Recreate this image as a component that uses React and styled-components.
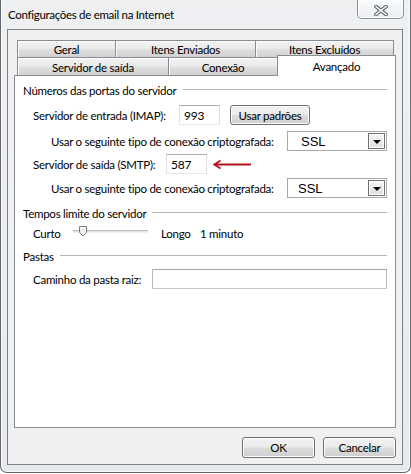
import React from 'react';
import styled, { createGlobalStyle } from 'styled-components';

const Global = createGlobalStyle`
  html, body { margin: 0; padding: 0; background: #ffffff; }
  body { font-family: Lato, "Noto Sans", sans-serif; font-size: 11.5px; letter-spacing: -0.25px; color: #000; }
  * { box-sizing: border-box; }
`;

const Window = styled.div`
  width: 411px;
  height: 473px;
  border: 1px solid #62666b;
  border-top: none;
  border-radius: 0 0 7px 7px;
  background: linear-gradient(#eef0f2, #e7eaed);
  box-shadow: inset 1px 0 0 #fbfcfd, inset -1px 0 0 #fbfcfd, inset 0 -1px 0 #fbfcfd;
  padding: 0 7px 7px 6px;
  display: flex;
  flex-direction: column;
`;

const TitleBar = styled.div`
  height: 29px;
  flex-shrink: 0;
  display: flex;
  align-items: flex-start;
`;

const Title = styled.div`
  margin-top: 7px;
  padding-left: 1px;
  line-height: 16px;
  font-size: 11.5px;
  letter-spacing: -0.3px;
  white-space: nowrap;
`;

const CloseButton = styled.div`
  margin-left: auto;
  margin-right: -1px;
  width: 47px;
  height: 19px;
  border: 1px solid #8a9096;
  border-top: none;
  border-radius: 0 0 5px 5px;
  background: linear-gradient(#f9fafb, #eceef1);
  box-shadow: inset 0 0 0 1px rgba(255, 255, 255, 0.85);
  display: flex;
  align-items: center;
  justify-content: center;
  padding-top: 2px;
`;

const Client = styled.div`
  flex: 1;
  border: 1px solid #7d8186;
  background: #f0f0f0;
  padding: 10px 6px 6px 6px;
  display: flex;
  flex-direction: column;
`;

const TabRow = styled.div`
  display: flex;
  align-items: flex-start;
  height: ${p => p.$h}px;
  padding-left: 3px;
  flex-shrink: 0;
`;

const Tab = styled.div`
  width: ${p => p.$w}px;
  height: ${p => p.$h}px;
  margin-left: ${p => (p.$first ? 0 : -1)}px;
  border: 1px solid #898c95;
  border-bottom: none;
  background: linear-gradient(#f3f3f3 0%, #ebebeb 45%, #dedede 55%, #d2d2d2 100%);
  box-shadow: inset 1px 1px 0 #fcfcfc;
  display: flex;
  align-items: center;
  justify-content: center;
  padding-top: ${p => p.$pt || 0}px;
  white-space: nowrap;
`;

const SelectedTab = styled.div`
  position: relative;
  z-index: 1;
  width: ${p => p.$w}px;
  height: 21px;
  margin-top: -2px;
  margin-left: -1px;
  border: 1px solid #898c95;
  border-bottom: none;
  background: #ffffff;
  display: flex;
  align-items: center;
  justify-content: center;
  white-space: nowrap;
`;

const Page = styled.div`
  height: 353px;
  flex-shrink: 0;
  border: 1px solid #898c95;
  background: #ffffff;
  padding: 7px 8px 0 8px;
  display: flex;
  flex-direction: column;
`;

const Row = styled.div`
  display: flex;
  align-items: center;
  flex-shrink: 0;
  height: ${p => p.$h}px;
  margin-top: ${p => p.$mt || 0}px;
  padding-left: ${p => p.$indent || 0}px;
`;

const GroupTitle = styled.span`
  white-space: nowrap;
`;

const GroupLine = styled.div`
  flex: 1;
  margin-left: 6px;
  border-top: 1px solid #b4b4b4;
  border-bottom: 1px solid #ffffff;
`;

const Label = styled.span`
  width: ${p => p.$w}px;
  flex-shrink: 0;
  white-space: nowrap;
`;

const TextBox = styled.input`
  width: ${p => (p.$w ? `${p.$w}px` : 'auto')};
  flex: ${p => (p.$w ? '0 0 auto' : '1')};
  min-width: 0;
  height: 20px;
  margin: 0;
  border: 1px solid;
  border-color: #abadb3 #dbdfe6 #e3e9ef #e2e3ea;
  background: #ffffff;
  padding: 0 0 0 4px;
  font: inherit;
  letter-spacing: inherit;
  font-size: 12px;
  color: #000;
  outline: none;
`;

const PathBox = styled(TextBox)`
  border-color: #a3a3a3 #b9b9b9 #c9c9c9 #b9b9b9;
`;

const PushButton = styled.div`
  width: ${p => p.$w}px;
  height: ${p => p.$h || 20}px;
  margin-left: ${p => p.$ml || 0}px;
  flex-shrink: 0;
  border: 1px solid #707070;
  border-radius: 3px;
  background: linear-gradient(#f2f2f2 0%, #ebebeb 49%, #dddddd 51%, #cfcfcf 100%);
  box-shadow: inset 0 0 0 1px #fcfcfc;
  display: flex;
  align-items: center;
  justify-content: center;
  white-space: nowrap;
`;

const Combo = styled.div`
  width: 100px;
  height: 20px;
  flex-shrink: 0;
  border: 1px solid #a8a8a8;
  background: #ffffff;
  display: flex;
  align-items: center;
`;

const ComboText = styled.span`
  flex: 1;
  padding-left: ${p => p.$pl}px;
  font-family: "Liberation Sans", Arial, sans-serif;
  font-size: 13px;
  letter-spacing: 0;
`;

const ComboArrow = styled.div`
  width: 17px;
  height: 16px;
  margin-right: 1px;
  border: 1px solid #707070;
  background: linear-gradient(#f6f6f6, #dedede);
  box-shadow: inset 0 0 0 1px #ffffff;
  display: flex;
  align-items: center;
  justify-content: center;
  &::after {
    content: '';
    width: 0;
    height: 0;
    border-left: 4px solid transparent;
    border-right: 4px solid transparent;
    border-top: 4px solid #000;
    margin-top: 1px;
  }
`;

const Slider = styled.div`
  position: relative;
  width: 75px;
  height: 12px;
  flex-shrink: 0;
`;

const Track = styled.div`
  position: absolute;
  left: 0;
  right: 0;
  top: 3px;
  height: 3px;
  border-top: 1px solid #bcbcbc;
  border-bottom: 1px solid #f0f0f0;
  background: #e4e4e4;
`;

const Thumb = styled.svg`
  position: absolute;
  left: 5px;
  top: -1px;
`;

const Spacer = styled.span`
  width: ${p => p.$w}px;
  flex-shrink: 0;
`;

const Footer = styled.div`
  display: flex;
  justify-content: flex-end;
  gap: 8px;
  margin-top: 9px;
`;

const RedArrow = () => (
  <svg width="39" height="11" viewBox="0 0 39 11" style={{ marginLeft: 6, flexShrink: 0 }}>
    <line x1="1.5" y1="5.5" x2="38" y2="5.5" stroke="#b3121c" strokeWidth="1.8" />
    <polyline points="7.5,1.5 1.2,5.5 7.5,9.5" fill="none" stroke="#b3121c" strokeWidth="1.8" strokeLinejoin="miter" />
  </svg>
);

const CloseGlyph = () => (
  <svg width="14" height="11" viewBox="0 0 14 11">
    <path d="M2 1.5 L12 9.5 M12 1.5 L2 9.5" stroke="#5d6670" strokeWidth="3.6" strokeLinecap="square" />
    <path d="M2 1.5 L12 9.5 M12 1.5 L2 9.5" stroke="#ffffff" strokeWidth="1.6" strokeLinecap="square" />
  </svg>
);

export default function App() {
  return (
    <>
      <Global />
      <Window>
        <TitleBar>
          <Title>Configurações de email na Internet</Title>
          <CloseButton>
            <CloseGlyph />
          </CloseButton>
        </TitleBar>
        <Client>
          <TabRow $h={17}>
            <Tab $first $w={99} $h={17}>Geral</Tab>
            <Tab $w={141} $h={17}>Itens Enviados</Tab>
            <Tab $w={139} $h={17}>Itens Excluídos</Tab>
          </TabRow>
          <TabRow $h={18}>
            <Tab $first $w={152} $h={18} $pt={1}>Servidor de saída</Tab>
            <Tab $w={110} $h={18} $pt={1}>Conexão</Tab>
            <SelectedTab $w={119}>Avançado</SelectedTab>
          </TabRow>
          <Page>
            <Row $h={14}>
              <GroupTitle>Números das portas do servidor</GroupTitle>
              <GroupLine />
            </Row>
            <Row $h={20} $mt={8} $indent={10}>
              <Label $w={146}>Servidor de entrada (IMAP):</Label>
              <TextBox $w={41} defaultValue="993" readOnly />
              <PushButton $w={80} $ml={10}>Usar padrões</PushButton>
            </Row>
            <Row $h={20} $mt={6} $indent={28}>
              <Label $w={236}>Usar o seguinte tipo de conexão criptografada:</Label>
              <Combo>
                <ComboText $pl={13}>SSL</ComboText>
                <ComboArrow />
              </Combo>
            </Row>
            <Row $h={20} $mt={3} $indent={10}>
              <Label $w={133}>Servidor de saída (SMTP):</Label>
              <TextBox $w={41} defaultValue="587" readOnly />
              <RedArrow />
            </Row>
            <Row $h={20} $mt={4} $indent={28}>
              <Label $w={236}>Usar o seguinte tipo de conexão criptografada:</Label>
              <Combo>
                <ComboText $pl={10}>SSL</ComboText>
                <ComboArrow />
              </Combo>
            </Row>
            <Row $h={14} $mt={8}>
              <GroupTitle>Tempos limite do servidor</GroupTitle>
              <GroupLine />
            </Row>
            <Row $h={20} $mt={3} $indent={10}>
              <Label $w={40}>Curto</Label>
              <Slider>
                <Track />
                <Thumb width="10" height="11" viewBox="0 0 10 11">
                  <path d="M1.5 0.5 H8.5 V6.5 L5 10 L1.5 6.5 Z" fill="#eeeeee" stroke="#7c7c7c" strokeWidth="1" />
                  <path d="M2.5 1.5 H7.5" stroke="#ffffff" strokeWidth="1" />
                </Thumb>
              </Slider>
              <Spacer $w={13} />
              <Label $w={39}>Longo</Label>
              <span>1 minuto</span>
            </Row>
            <Row $h={14} $mt={6}>
              <GroupTitle>Pastas</GroupTitle>
              <GroupLine />
            </Row>
            <Row $h={20} $mt={6} $indent={10}>
              <Label $w={119}>Caminho da pasta raiz:</Label>
              <PathBox defaultValue="" readOnly />
            </Row>
          </Page>
          <Footer>
            <PushButton $w={73} $h={21}>OK</PushButton>
            <PushButton $w={73} $h={21}>Cancelar</PushButton>
          </Footer>
        </Client>
      </Window>
    </>
  );
}
